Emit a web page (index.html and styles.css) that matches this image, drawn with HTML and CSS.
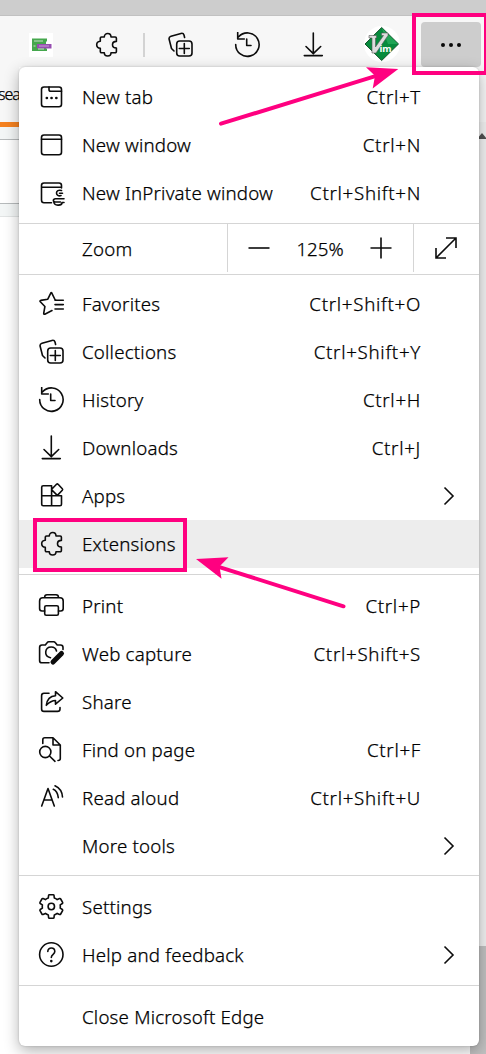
FILE: index.html
```html
<!DOCTYPE html>
<html lang="en">
<head>
<meta charset="utf-8">
<title>Browser menu</title>
<link rel="stylesheet" href="styles.css">
</head>
<body>
<svg class="defs" width="0" height="0">
  <symbol id="puzzle" viewBox="0 0 26 26"><path d="M8.5 5H11.3C11.3 2.9 12.7 1.5 14.7 1.5S18 2.9 18 5H22.2a1.2 1.2 0 0 1 1.2 1.2V9.4C21 9.4 19.5 10.7 19.5 12.7S21 16 23.400 16V19.500a1.200 1.200 0 0 1-1.200 1.200H18C18 22.800 16.700 24 14.700 24S11.300 22.800 11.300 20.700H8.500A1.200 1.200 0 0 1 7.300 19.500V16.200C5 16 3.700 14.700 3.700 12.700S5 9.500 7.300 9.300V6.200A1.200 1.200 0 0 1 8.500 5Z"/></symbol>
  <symbol id="collections" viewBox="0 0 26 26"><path d="M7 19L4.500 16.500 2.200 7.500Q1.500 5 4 4.200L14 1.400Q16.300.8 17 3L17.600 5.500"/><rect x="9.700" y="9" width="15.300" height="15" rx="3"/><path d="M17.300 11.500V21.500M12.300 16.500H22.300"/></symbol>
  <symbol id="history" viewBox="0 0 26 26"><path d="M1.700 12.500A11.700 11.700 0 1 0 4.700 4.800M3.700.5V7H10.300M12.700 7V13.500H17"/></symbol>
  <symbol id="download" viewBox="0 0 26 26"><path d="M13.300 1V21.500M6 14.500L13.300 21.600 20.700 14.500M4.300 23.600H22.300"/></symbol>
</svg>

<div class="titlebar"></div>
<header class="toolbar">
  <svg class="thumb" viewBox="0 0 24 24"><path fill="#fff" d="M0 0h24v24H0z"/><path fill="#45a74d" d="M3 5.500h15v3h-1v7h1v2.500H3z"/><path fill="#964db0" d="M8 11h14.500v4.500H8z"/><path stroke="#c9dfca" d="M5 8h9M4.500 13h2M9 16h6"/><path stroke="#c6a1d3" d="M10 13h10"/></svg>
  <svg class="icon t-puzzle"><use href="#puzzle"/></svg>
  <span class="separator"></span>
  <svg class="icon t-collections"><use href="#collections"/></svg>
  <svg class="icon t-history"><use href="#history"/></svg>
  <svg class="icon t-download"><use href="#download"/></svg>
  <svg class="vim" viewBox="0 0 36 36"><circle cx="18" cy="18" r="18" fill="#fff"/><path d="M17.700 1.500L34.500 18 17.700 34.500 1 18Z" fill="#078b3d" stroke="#14532b"/><path d="M17.700 2L34 18H24Z" fill="#20a555"/><path d="M5 9.500H12.500V12H11.500V21L19.500 9.500H17.500V7H24V9.500L12 27H8V12H5Z" fill="#ddd" stroke="#555" stroke-width=".6"/><text x="15.500" y="26" class="vim-text">im</text></svg>
  <button class="more"><i></i><i></i><i></i></button>
</header>

<div class="page">
  <aside class="left"><div class="tab">sea</div><div class="accent"></div><div class="band"></div><div class="field"></div><div class="band foot"></div></aside>

  <nav class="menu">
    <section>
      <div class="item"><svg class="icon"><rect x="3.500" y="3" width="20" height="19.700" rx="2.500"/><path d="M11 3V5.500Q11 7.300 12.800 7.300H23.500"/><path class="dots" d="M8.800 14H8.900M13.500 14H13.600M18.300 14H18.400"/></svg><span class="label">New tab</span><span class="key">Ctrl+T</span></div>
      <div class="item"><svg class="icon"><rect x="3.500" y="3" width="20" height="19.700" rx="2.500"/><path d="M3.500 7.300H23.500"/></svg><span class="label">New window</span><span class="key">Ctrl+N</span></div>
      <div class="item"><svg class="icon"><path d="M23.500 8V5.500Q23.500 3 21 3H6Q3.500 3 3.500 5.500V20Q3.500 22.700 6 22.700H13.500M3.500 7.300H23.500M23.500 10.500C20.500 9.600 18.500 11 18.500 13S20.500 16.500 23 15.600M21.500 13.200H24.500M26 18.800H17.500C14.500 18.800 14.800 22 17.500 22H22.500M15.800 22C16.200 25.700 23.500 26.500 24.200 22.500H26"/></svg><span class="label">New InPrivate window</span><span class="key">Ctrl+Shift+N</span></div>
    </section>
    <div class="zoom-row">
      <span class="label zoom-label">Zoom</span>
      <div class="zoom-controls"><svg class="glyph" viewBox="0 0 22 22"><path d="M.5 11H21.500"/></svg><span>125%</span><svg class="glyph" viewBox="0 0 22 22"><path d="M.5 11H21.500M11 .5V21.500"/></svg></div>
      <div class="full"><svg class="glyph" viewBox="0 0 22 22"><path d="M1 21L21 1M11 1H21V11M1 11V21H11"/></svg></div>
    </div>
    <section class="places">
      <div class="item"><svg class="icon"><path d="M18 9H17.200L13.700 1.800Q13.300 1.200 12.900 1.800L9.800 8.200 2.700 9.400Q1.400 9.800 2.300 10.800L6.900 15.500 5.700 22.300Q5.700 23.600 6.800 23.200L14 19.500M17 9.300H25.300M17 13.600H25.300M17 18H25.300"/></svg><span class="label">Favorites</span><span class="key">Ctrl+Shift+O</span></div>
      <div class="item"><svg class="icon"><use href="#collections"/></svg><span class="label">Collections</span><span class="key">Ctrl+Shift+Y</span></div>
      <div class="item"><svg class="icon"><use href="#history"/></svg><span class="label">History</span><span class="key">Ctrl+H</span></div>
      <div class="item"><svg class="icon"><use href="#download"/></svg><span class="label">Downloads</span><span class="key">Ctrl+J</span></div>
      <div class="item"><svg class="icon"><path d="M13.600 12.700V2.700H5.200Q3.700 2.700 3.700 4.200V21.200Q3.700 22.700 5.200 22.700H22Q23.500 22.700 23.500 21.200V12.700H3.700M13.600 12.700V22.700M18.500 1.300L14.200 5.700Q13.500 6.500 14.200 7.300L18.500 11.600Q19.300 12.300 20.100 11.600L24.300 7.300Q25 6.500 24.300 5.700L20.100 1.300Q19.300.6 18.500 1.300Z"/></svg><span class="label">Apps</span><svg class="chevron" viewBox="0 0 12 20"><path d="M1.500 1.500L10 10 1.500 18.500"/></svg></div>
      <div class="item selected"><svg class="icon"><use href="#puzzle"/></svg><span class="label">Extensions</span></div>
    </section>
    <section class="tools">
      <div class="item"><svg class="icon"><path d="M6.700 18H4Q1.600 18 1.600 15.500V8Q1.600 4.800 4.800 4.800H22Q25.200 4.800 25.200 8V15.500Q25.200 18 22.700 18H20.500M6.700 4.800V4Q6.700 1.700 9 1.700H18Q20.400 1.700 20.400 4V4.800"/><rect x="6.700" y="12.800" width="13.700" height="9.500" rx="1.500"/></svg><span class="label">Print</span><span class="key">Ctrl+P</span></div>
      <div class="item"><svg class="icon"><path d="M11 21.800H4Q1.600 21.800 1.600 19.400V6.500Q1.600 4 4 4H7.300L9.300 1.500Q9.800.8 10.700.8H15.700Q16.700.8 17.200 1.500L19.200 4H22.500Q25 4 25 6.500V8.500M12.500 16.700C5.500 15.500 6.500 6 13.300 6Q17.500 6 18.500 10"/><path class="pen" d="M15 21L23.500 12.500"/></svg><span class="label">Web capture</span><span class="key">Ctrl+Shift+S</span></div>
      <div class="item"><svg class="icon"><path d="M11 4.300H6Q3.600 4.300 3.600 6.700V20Q3.600 22.400 6 22.400H19.500Q22 22.400 22 20V18.500M8.300 16.300C9 10.300 12 7 17.500 6.700V2.700L24.800 9 17.500 15.200V11.500C13.500 11.500 11.500 13 8.300 16.300Z"/></svg><span class="label">Share</span></div>
      <div class="item"><svg class="icon"><path d="M4.800 6.500V2.800Q4.800.8 6.800.8H15L22.300 8V21.500Q22.300 23.500 20 23.500M15 .8V8H22.300M11.500 19L17 24.300"/><circle cx="7.300" cy="15" r="5.600"/></svg><span class="label">Find on page</span><span class="key">Ctrl+F</span></div>
      <div class="item"><svg class="icon"><path d="M3.700 21L10 3.500 16.300 21M6 15H14.100M15.300 4.300Q19.500 6 20.300 12.700M17 .8Q24 4 24.500 12"/></svg><span class="label">Read aloud</span><span class="key">Ctrl+Shift+U</span></div>
      <div class="item"><span class="icon"></span><span class="label">More tools</span><svg class="chevron" viewBox="0 0 12 20"><path d="M1.500 1.500L10 10 1.500 18.500"/></svg></div>
    </section>
    <section class="settings">
      <div class="item"><svg class="icon"><path transform="translate(13.300 12.500)" d="M-1.900-11.800H1.900Q2.600-11.800 2.700-11.100L3-8.500Q4.500-8 5.900-6.900L8.300-7.900Q9-8.200 9.400-7.500L11.300-4.200Q11.700-3.500 11.100-3L8.900-1.600Q9.200 0 8.900 1.600L11.100 3Q11.700 3.500 11.300 4.200L9.400 7.500Q9 8.200 8.300 7.900L5.900 6.900Q4.500 8 3 8.500L2.700 11.100Q2.600 11.800 1.900 11.800H-1.900Q-2.600 11.800-2.700 11.100L-3 8.500Q-4.500 8-5.900 6.900L-8.300 7.900Q-9 8.200-9.400 7.500L-11.300 4.200Q-11.700 3.500-11.100 3L-8.900 1.600Q-9.200 0-8.900-1.600L-11.100-3Q-11.700-3.500-11.300-4.200L-9.400-7.500Q-9-8.200-8.300-7.900L-5.900-6.900Q-4.500-8-3-8.500L-2.700-11.100Q-2.600-11.800-1.900-11.800Z"/><circle cx="13.300" cy="12.500" r="3.200"/></svg><span class="label">Settings</span></div>
      <div class="item"><svg class="icon"><circle cx="13.300" cy="12.500" r="11.700"/><path d="M9.800 9.500C9.800 4.800 16.800 5 16.800 9.500C16.800 12.300 13.300 12.300 13.300 15.500"/><path class="dots" d="M13.300 19V19.100"/></svg><span class="label">Help and feedback</span><svg class="chevron" viewBox="0 0 12 20"><path d="M1.500 1.500L10 10 1.500 18.500"/></svg></div>
    </section>
    <section class="closing"><div class="item"><span class="icon"></span><span class="label">Close Microsoft Edge</span></div></section>
  </nav>

  <aside class="scroll"><div class="track"><svg viewBox="0 0 16 6"><path d="M3 6L8 0 13 6Z"/></svg></div><div class="scroll-end"></div></aside>
</div>

<div class="mark mark-more"></div>
<div class="mark mark-extensions"></div>
<svg class="arrows" viewBox="0 0 486 1054"><path class="shaft" d="M221 123.700L377 75.700M343.500 606.300L217 566.300"/><path class="head" d="M398.300 69L366 67.200 375 75.700 372.700 88.500ZM196 559L228.500 557.200 219.500 566.500 221.500 578.800Z"/></svg>
</body>
</html>
```

FILE: styles.css
```css
* { box-sizing: border-box; }
body { margin: 0; width: 486px; height: 1054px; overflow: hidden; position: relative; background: #fff; color: #000; font: 300 18.7px/24px "Noto Sans", sans-serif; letter-spacing: .2px; -webkit-text-stroke: .25px #000; }
svg { -webkit-text-stroke: 0; }
.defs { position: absolute; }
.titlebar { height: 16px; background: #cdcdcd; border-bottom: 1px solid #c1c1c1; }
.toolbar { height: 51px; background: #f7f7f7; display: flex; align-items: flex-start; padding-left: 29px; }
.icon { width: 26px; height: 26px; flex: none; overflow: visible; fill: none; stroke: #0c0c0c; stroke-width: 1.6; stroke-linecap: round; stroke-linejoin: round; }
.thumb { width: 24px; height: 24px; margin-top: 17px; }
.t-puzzle { margin: 16px 0 0 40px; }
.separator { width: 2px; height: 24px; margin: 17px 0 0 24px; background: #d3d3d3; }
.t-collections { margin: 16px 0 0 22px; }
.t-history { margin: 16px 0 0 41px; }
.t-download { margin: 16px 0 0 40px; }
.vim { width: 36px; height: 36px; margin: 10px 0 0 38px; }
.vim-text { font: bold 9.5px "Noto Sans", sans-serif; letter-spacing: 0; fill: #fff; }
.more { width: 60px; height: 45px; margin: 6px 0 0 21px; padding: 0; border: 0; border-radius: 4px; background: #cdcdcd; display: flex; align-items: center; justify-content: center; gap: 4px; }
.more i { width: 4px; height: 4px; border-radius: 50%; background: #080808; }
.page { height: 987px; display: flex; }
.left { width: 19px; flex: none; overflow: hidden; }
.tab { height: 55px; padding-top: 15px; background: #f7f7f7; font-size: 16px; letter-spacing: -1px; text-indent: -2px; }
.accent { height: 5px; background: #f58220; }
.band { height: 12px; background: #f3f6f6; }
.field { height: 65px; border: solid #b6babb; border-width: 1px 0; }
.foot { height: 13px; border-bottom: 1px solid #e1e4e4; }
.menu { width: 460px; height: 979px; flex: none; position: relative; background: #fff; border-radius: 6px; box-shadow: 0 5px 15px rgba(0,0,0,.3), 0 0 2px rgba(0,0,0,.22); }
.menu section { padding: 6px 0; }
.menu .places { padding: 5px 0 6px; }
.item { height: 48px; display: flex; align-items: center; padding: 0 58px 0 19px; }
.item.selected { background: #ededed; }
.label { margin-left: 18px; white-space: nowrap; }
.key { margin-left: auto; white-space: nowrap; letter-spacing: .7px; }
.chevron { width: 12px; height: 20px; margin: 0 -34px 0 auto; }
.chevron, .glyph { fill: none; stroke: #0c0c0c; stroke-width: 1.6; }
.dots { stroke-width: 2.6; }
.pen { stroke-width: 5; }
.zoom-row { height: 52px; display: flex; border: solid #d5d5d5; border-width: 1px 0; }
.zoom-label { width: 145px; margin-left: 63px; padding-top: 13px; }
.zoom-controls { width: 187px; height: 48px; border: solid #d5d5d5; border-width: 0 1px; display: flex; align-items: center; justify-content: space-between; padding: 0 21px 0 20px; }
.zoom-controls span { padding-top: 2px; letter-spacing: 0; }
.glyph { width: 22px; height: 22px; }
.full { flex: 1; display: flex; justify-content: center; padding: 13px 2px 0 0; }
.menu .tools { padding: 7px 0 5px; border-top: 1px solid #d5d5d5; }
.menu .settings { padding: 7px 0 6px; border-top: 1px solid #d5d5d5; }
.menu .closing { padding: 7px 0; border-top: 1px solid #d5d5d5; }
.scroll { width: 16px; margin-left: -9px; flex: none; background: #f1f1f1; display: flex; flex-direction: column; }
.track { height: 879px; border-top: 55px solid #f7f7f7; padding-top: 11px; }
.track svg { width: 16px; height: 6px; display: block; margin-left: 4px; fill: #505050; }
.scroll-end { flex: 1; background: #c1c1c1; }
.mark { position: absolute; border: 4px solid #ff0080; }
.mark-more { left: 412px; top: 13px; width: 76px; height: 62px; }
.mark-extensions { left: 33px; top: 518px; width: 154px; height: 54px; }
.arrows { position: absolute; inset: 0; width: 486px; height: 1054px; }
.shaft { stroke: #ff0080; stroke-width: 4; stroke-linecap: round; }
.head { fill: #ff0080; }
```
